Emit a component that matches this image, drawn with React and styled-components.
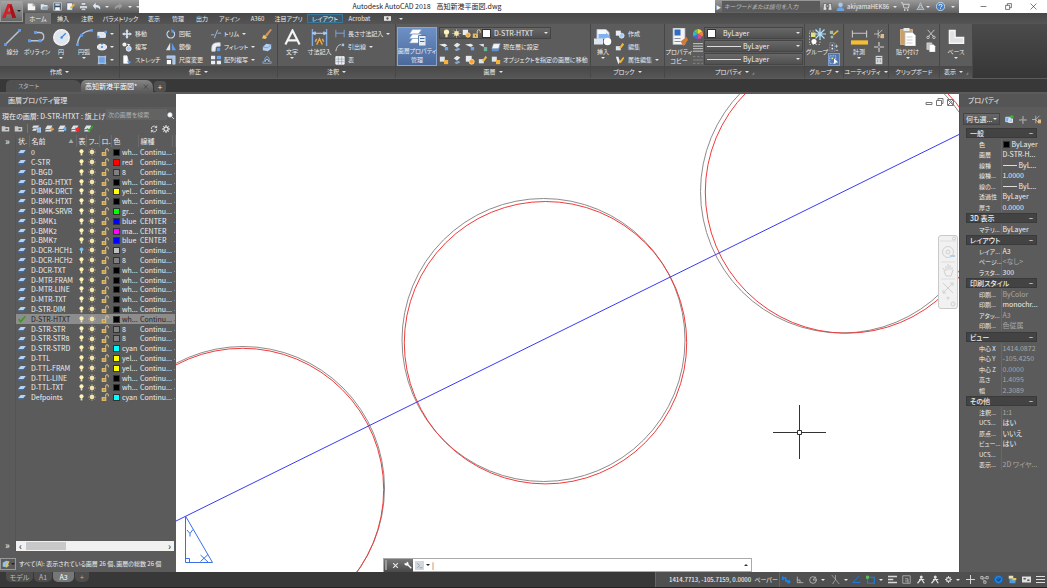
import React from 'react';
import styled, { createGlobalStyle } from 'styled-components';

const icons = {
    line: <g><path d="M1 11L11 1" stroke="#b9c6d6" /><path d="M0 10h2v2H0zM10 0h2v2h-2z" fill="#5f9bea" stroke="none" /></g>,
    polyline: <g><path d="M1 8.500h6.500c4 0 4-5.500 0-5.500H5" stroke="#b9c6d6" strokeWidth=".9" /><path d="M0 7.500h2v2H0zM4 2h2v2H4zM7 7.500h2v2H7z" fill="#5f9bea" stroke="none" /></g>,
    circle: <g><circle cx="6" cy="6" r="5.500" fill="#dfe5ec" stroke="#f2f2f2" /><path d="M6 6l3-3" stroke="#3d82dd" strokeWidth=".8" /><path d="M5.300 5.300h1.500v1.500H5.300z" fill="#3d82dd" stroke="none" /></g>,
    arc: <g><path d="M1 11Q2 2 11 1" stroke="#b9c6d6" /><path d="M0 10h2v2H0zM3 3.500h2v2H3zM10 0h2v2h-2z" fill="#5f9bea" stroke="none" /></g>,
    rect: <g><path d="M1 4h9v6H1z" fill="#dfe5ec" stroke="#fff" /><path d="M9 2h3v3H9zM0 8h3v3H0z" fill="#5f9bea" stroke="none" /></g>,
    ellipse: <g><ellipse cx="6" cy="6" rx="5.500" ry="3.500" fill="#dfe5ec" stroke="#fff" /><path d="M5 5h2v2H5zM5 1h2v2H5z" fill="#2f6fc9" stroke="none" /></g>,
    hatch: <g><path d="M2 2h8v8H2z" fill="#6da2e6" stroke="#c9d9ee" /><path d="M1 1h2v2H1zM9 1h2v2H9zM1 9h2v2H1zM9 9h2v2H9z" fill="#9fc4f5" stroke="none" /></g>,
    move: <g><path d="M6 0l2 3H7v2h2V4l3 2-3 2V7H7v2h1l-2 3-2-3h1V7H3v1L0 6l3-2v1h2V3H4z" fill="#d9e6f5" stroke="none" /></g>,
    copy: <g><circle cx="3" cy="3" r="2.500" fill="#eee" stroke="none" /><circle cx="8" cy="8" r="3" fill="#a9cbf3" stroke="#fff" /><path d="M6 2l4 1-2 2z" fill="#fff" stroke="none" /></g>,
    stretch: <g><path d="M2 1h4l2 9H2z" fill="#fff" stroke="#dfe5ec" /><path d="M6 7l5 1-3 3z" fill="#5f9bea" stroke="none" /></g>,
    rotate: <g><path d="M4 2a4.600 4.600 0 1 0 5 1" stroke="#c4d8f0" strokeWidth="1.300" /><path d="M6 0l4 2-3 3z" fill="#5f9bea" stroke="none" /></g>,
    mirror: <g><path d="M5 1v9H0z" fill="#dfe5ec" stroke="none" /><path d="M7 1v9h5z" fill="#5f9bea" stroke="none" /></g>,
    scale: <g><path d="M1 1h10v10H8V4H1z" fill="#9fc4f5" stroke="#dfe5ec" strokeWidth=".6" /><path d="M1 6h5v5H1z" fill="#fff" stroke="none" /></g>,
    trim: <g><path d="M0 7h4M8 1L4 11M8 5h4" stroke="#a8c8ee" /></g>,
    fillet: <g><path d="M1 11V7q0-6 7-6h3v4H8q-3 0-3 6z" fill="#f1f1f1" stroke="#c9d9ee" /><path d="M7 7h4v4H7z" fill="#5f9bea" stroke="none" /></g>,
    array: <g><path d="M0 1h5v4H0zM0 7h5v4H0zM7 7h5v4H7z" fill="#e7eef7" stroke="none" /><path d="M7 1h5v4H7z" fill="#6fa6ea" stroke="none" /></g>,
    erase: <g><path d="M3 8l7-8 2 1-6 8z" fill="#d69355" stroke="none" /><path d="M0 11l2-4 4 3-2 2z" fill="#f6c65b" stroke="none" /></g>,
    explode: <g><path d="M1 6l4-4 6 1v5l-4 3-6-1z" fill="#b6d0f0" stroke="none" /><path d="M1 6l6 1 4-4" stroke="#5f9bea" /></g>,
    offset: <g><path d="M1 10h10V8H9Q9 2 6 2T3 8H1z" stroke="#7ba9e4" /><path d="M4 8q0-3 2-3t2 3" stroke="#c9d9ee" /></g>,
    letter: <g><path d="M1 11L6 1l5 10M3 8h6" stroke="#f4f4f4" strokeWidth="1.500" /></g>,
    dimension: <g><path d="M1 0v12M11 0v12" stroke="#7ba9e4" /><path d="M1 3h10M1 3l2-1v2zM11 3L9 2v2z" stroke="#bcd4f2" strokeWidth=".7" /><path d="M4 11l2-4 2 4M3 9l1-2M9 9L8 7" stroke="#f2a93b" /></g>,
    length: <g><path d="M1 1v9M11 1v9M1 5h10" stroke="#7fb1f2" /></g>,
    leader: <g><path d="M1 11q1-7 6-8" stroke="#ddd" /><path d="M8 2h3v3H8z" fill="#9fc4f5" stroke="none" /></g>,
    table: <g><path d="M1 2h10v9H1z" fill="#e8edf3" stroke="#fff" /><path d="M1 5h10M1 8h10M4 2v9M8 2v9" stroke="#7a8694" strokeWidth=".6" /></g>,
    layers: <g><path d="M3 1h6L7 4H1zM3 4h6L7 7H1zM3 7h6l-2 3H1z" fill="#fff" stroke="#8aa5c8" strokeWidth=".4" /><path d="M7 5h5v7H7z" fill="#e6ecf4" stroke="#3b5f93" strokeWidth=".5" /><path d="M8 7h3M8 9h3" stroke="#456ea8" strokeWidth=".7" /></g>,
    bulb: <g><circle cx="6" cy="4" r="3.500" fill="#fff3b5" stroke="none" /><path d="M4.500 7h3v4h-3z" fill="#ede3bd" stroke="none" /></g>,
    bulbOff: <g><circle cx="6" cy="4" r="3.200" fill="#7fc0ee" stroke="none" /><path d="M5 7h2v4H5z" fill="#cfdbe4" stroke="none" /></g>,
    sun: <g><circle cx="6" cy="6" r="3.200" fill="#fff0bb" stroke="none" /><path d="M6 0v12M0 6h12M2 2l8 8M10 2l-8 8" stroke="#f0dda0" strokeWidth=".7" /></g>,
    lock: <g><path d="M1 6h7v6H1z" fill="#dcb765" stroke="none" /><path d="M7 6V3q0-2 2-2t2 2v2" stroke="#e6cb8d" strokeWidth="1.300" /><path d="M4 8h1v2H4z" fill="#574718" stroke="none" /></g>,
    layer: <g><path d="M4 3h8L8 8H0z" fill="#b8d4f5" stroke="none" /><path d="M0 8h8l4-5v2L8 10H0z" fill="#41699f" stroke="none" /></g>,
    check: <g><path d="M1 6l3 4 7-8" stroke="#3b9a1e" strokeWidth="2.400" /></g>,
    freeze: <g><path d="M1 1h7v7H1z" fill="#e6ecf2" stroke="none" /><circle cx="8" cy="8" r="3" fill="#f3a637" stroke="#ffe39f" /></g>,
    layerBlue: <g><path d="M0 3l7-1 3 2-3 2z" fill="#e7edf3" stroke="none" /><path d="M7 6h4v4H7z" fill="#68a5ee" stroke="none" /></g>,
    layerDots: <g><path d="M2 4l4-3 4 2-4 4z" fill="#e4e7ea" stroke="none" /><path d="M3 9l5-2 2 2-5 2z" fill="#86a9d4" stroke="none" /></g>,
    layerGreen: <g><path d="M1 3l6-1v4z" fill="#dce3ea" stroke="none" /><path d="M7 6h4v5H7z" fill="#72b29c" stroke="none" /></g>,
    layerGold: <g><path d="M1 2h6v6H1z" fill="#dbe3ec" stroke="none" /><path d="M6 6h5v5H6z" fill="#f2b23c" stroke="none" /></g>,
    stack: <g><path d="M3 2h8L9 8H1z" fill="#f1f4f8" stroke="#8fa6c1" strokeWidth=".6" /><path d="M1 8h8l2-6v3l-2 6H1z" fill="#5f8fd0" stroke="none" /></g>,
    insert: <g><path d="M2 1h6l2 2v4H2z" fill="#f6f7f9" stroke="#b9c9dc" strokeWidth=".6" /><path d="M3 4h5V3l3 3-3 2V7H3z" fill="#7fb1f2" stroke="none" /><path d="M0 7h6v4H0z" fill="#dfe6ef" stroke="none" /><circle cx="9" cy="9" r="2.500" fill="#fff" stroke="none" /></g>,
    block: <g><path d="M1 2h6v6H1z" fill="#e8edf3" stroke="none" /><circle cx="8" cy="8" r="3" fill="#a9cbf3" stroke="#fff" strokeWidth=".7" /></g>,
    blockEdit: <g><path d="M1 5h6v5H1z" fill="#dbe3ec" stroke="none" /><path d="M5 7l4-6 2 2-4 5z" fill="#f2b23c" stroke="none" /></g>,
    attribute: <g><path d="M1 2h3l2 6-2 3z" fill="#e9edf1" stroke="none" /><path d="M5 8l5-6 1 2-4 6z" fill="#f2b23c" stroke="none" /></g>,
    match: <g><path d="M2 0h8v11H2z" fill="#f3f4f6" stroke="#a5afba" strokeWidth=".5" /><path d="M3 1h4v4H3z" fill="#2d6cc0" stroke="none" /><path d="M3 7h4M3 9h4" stroke="#77818d" strokeWidth=".6" /><path d="M7 9l4-3 1 2-3 4z" fill="#d27b35" stroke="none" /></g>,
    wheel: <g stroke="none"><path d="M6 6V0a6 6 0 0 1 5.200 3z" fill="#f5d33c" /><path d="M6 6l5.200-3a6 6 0 0 1 0 6z" fill="#ee8340" /><path d="M6 6l5.200 3A6 6 0 0 1 6 12z" fill="#d9469c" /><path d="M6 6v6a6 6 0 0 1-5.200-3z" fill="#4769d8" /><path d="M6 6L.8 9a6 6 0 0 1 0-6z" fill="#36b6c9" /><path d="M6 6L.8 3A6 6 0 0 1 6 0z" fill="#6cc24a" /></g>,
    lines: <g><path d="M0 2h12M0 5h12M0 8h12M0 11h12" stroke="#dedede" /></g>,
    menu: <g><path d="M0 2h12M0 6h12M0 10h12" stroke="#dedede" strokeWidth="1.400" /></g>,
    linetype: <g><path d="M0 2h3M5 2h3M10 2h2M0 6h12M0 10h3M5 10h3M10 10h2" stroke="#8d8d8d" /></g>,
    group: <g><path d="M1 2h7v9H1z" stroke="#bcbcbc" strokeDasharray="1 1" strokeWidth=".6" /><path d="M2 3h3v3H2z" fill="#e8e173" stroke="none" /><circle cx="4" cy="9" r="1.700" fill="#fff" stroke="none" /><path d="M8 0v8M4 4h8M5 1l6 6M11 1L5 7" stroke="#aee0ff" strokeWidth=".8" /></g>,
    ungroup: <g><path d="M1 2h4v4H1zM2 8h3v3H2z" fill="#9bc2a5" stroke="none" /><path d="M5 7l6-5" stroke="#f2b23c" strokeWidth="2" /></g>,
    groupEdit: <g><path d="M1 1h6v10H1z" stroke="#91b2dc" strokeDasharray="1 1" /><path d="M3 3h2v2H3zM3 7h2v2H3z" fill="#dce6f2" stroke="none" /><path d="M9 3v4M7 5h4M8 10h3" stroke="#ccc" /></g>,
    groupSelect: <g><path d="M1 1h7v9H1z" stroke="#e9f3ff" strokeDasharray="1 1" /><path d="M3 3h2v2H3z" fill="#d7e98b" stroke="none" /><path d="M6 4l5 5-3 0-2 2z" fill="#fff" stroke="none" /></g>,
    measure: <g><path d="M1 1v5M11 1v5M1 3h10" stroke="#c4c4c4" strokeWidth=".8" /><path d="M0 8h12v3H0z" fill="#f5bd30" stroke="none" /></g>,
    quick: <g><path d="M0 6h5M5 1v10M5 6l5-5M5 6l4 5" stroke="#d1d1d1" strokeWidth=".9" /><path d="M8 6h4v5H8z" fill="#e3bb83" stroke="none" /></g>,
    point: <g><path d="M6 0v5M6 7v5M0 6h5M7 6h5" stroke="#d9d9d9" strokeWidth="1.300" /></g>,
    cross: <g><path d="M6 0v12M0 6h12" stroke="#d9d9d9" strokeWidth="1.300" /></g>,
    calc: <g><path d="M2 1h8v10H2z" fill="#d7dadd" stroke="none" /><path d="M3 3h6M4 6h1M7 6h1M4 8h1M7 8h1" stroke="#555" /></g>,
    paste: <g><path d="M1 1h8v10H1z" fill="#caa066" stroke="#e1bf8e" strokeWidth=".5" /><path d="M3 0h4v2H3z" fill="#e9e9e9" stroke="none" /><path d="M4 3h5l2 2v7H4z" fill="#fff" stroke="#b8bcc2" strokeWidth=".5" /><path d="M5 6h4M5 8h4M5 10h4" stroke="#aaa" strokeWidth=".4" /></g>,
    cut: <g><path d="M2 1l7 8M10 1L3 9" stroke="#dadada" /><circle cx="2.500" cy="10" r="1.500" stroke="#dadada" /><circle cx="9.500" cy="10" r="1.500" stroke="#dadada" /></g>,
    pages: <g><path d="M1 1h6v8H1z" fill="#bfc3c8" stroke="#eee" strokeWidth=".6" /><path d="M4 3h5l2 2v7H4z" fill="#fff" stroke="#999" strokeWidth=".4" /></g>,
    base: <g><path d="M1 1h4v5h6v4H1z" fill="#dfe1e4" stroke="#f5f5f5" /></g>,
    fileNew: <g><path d="M1 2h7l3 3v6H1z" fill="#f4f4f4" stroke="none" /><path d="M8 2v3h3" stroke="#7b8288" /></g>,
    open: <g><path d="M1 3h4l1 1h4v6H1z" fill="#dbe7ef" stroke="none" /><path d="M2 9l2-3h8l-2 4z" fill="#95a7b3" stroke="none" /></g>,
    save: <g><path d="M1 1h10v10H1z" fill="#354c61" stroke="#dce4ea" /><path d="M3 7h6v4H3z" fill="#fff" stroke="none" /><path d="M3 2h6v3H3z" fill="#c7d4df" stroke="none" /></g>,
    saveAs: <g><path d="M1 1h8v10H1z" fill="#f4f4f4" stroke="#445b70" /><path d="M5 8l5-6 2 2-5 5z" fill="#efad37" stroke="none" /></g>,
    print: <g><path d="M3 1h6v3H3zM1 5h10v4H1zM3 8h6v3H3z" fill="#e8ecef" stroke="#39424b" strokeWidth=".5" /></g>,
    undo: <g><path d="M1 5l4-4v3q7 0 6 6-2-3-6-3v3z" fill="#dbe9f7" stroke="none" /></g>,
    redo: <g><path d="M11 5L7 1v3Q0 4 1 10q2-3 6-3v3z" fill="#9a9fa4" stroke="none" /></g>,
    binoculars: <g><path d="M1 2h4v9H0zM7 2h4l1 9H7zM4 4h4v3H4z" fill="#dedede" stroke="#333" strokeWidth=".6" /></g>,
    user: <g><circle cx="6" cy="3.500" r="3" fill="#a5c9f2" stroke="none" /><path d="M1 12q0-5 5-5t5 5z" fill="#6fa2dc" stroke="none" /></g>,
    cart: <g><path d="M0 1h2l2 7h6l1-5H3" stroke="#e7edf3" /><circle cx="5" cy="10.500" r="1" fill="#fff" /><circle cx="9" cy="10.500" r="1" fill="#fff" /></g>,
    autodesk: <g><path d="M6 1l3 7H3zM1 10l5-6 5 6z" stroke="#b9d0ea" /></g>,
    help: <g><circle cx="6" cy="6" r="5.500" fill="#3f7ec6" stroke="#e3edf7" /><path d="M4 5q0-2 2-2t2 1.500Q8 6 6 7M6 8.500v1" stroke="#fff" strokeWidth="1.300" /></g>,
    folder: <g><path d="M1 3h4l1 1h5v6H1z" fill="#c7c7c7" stroke="none" /><path d="M6 6h3v2H6z" fill="#555" stroke="none" /></g>,
    layerState: <g><path d="M2 2h8L7 5H0zM2 6h5l-2 3H0z" fill="#dce3ea" stroke="none" /><path d="M7 5h5v6H7z" fill="#89b8ec" stroke="#eee" strokeWidth=".6" /></g>,
    layerNew: <g><path d="M3 2h7L7 7H0zM1 8h7v2H0z" fill="#dce3ea" stroke="none" /><path d="M9 4v6M6 7h6" stroke="#f79b31" strokeWidth="1.700" /></g>,
    layerVp: <g><path d="M3 2h7L7 7H0zM1 8h7v2H0z" fill="#dce3ea" stroke="none" /><path d="M8 4h3v5H8z" fill="#6aafe5" stroke="none" /></g>,
    layerDel: <g><path d="M3 2h7L7 7H0zM1 8h7v2H0z" fill="#dce3ea" stroke="none" /><path d="M6 5l5 5M11 5l-5 5" stroke="#f02b2b" strokeWidth="1.700" /></g>,
    layerSet: <g><path d="M3 2h7L7 7H0zM1 8h7v2H0z" fill="#dce3ea" stroke="none" /><path d="M4 6l3 3 5-6" stroke="#35a52b" strokeWidth="2" /></g>,
    refresh: <g><path d="M2 6a4 4 0 0 1 7-3l1 1M10 6a4 4 0 0 1-7 3L2 8M10 1v3H7M2 11V8h3" stroke="#e1e1e1" strokeWidth="1.300" /></g>,
    gear: <g><circle cx="6" cy="6" r="3.200" stroke="#ececec" strokeWidth="1.800" /><path d="M6 0v2M6 10v2M0 6h2M10 6h2M2 2l1 1M9 9l1 1M10 2L9 3M3 9l-1 1" stroke="#ececec" strokeWidth="1.500" /></g>,
    search: <g><circle cx="5" cy="5" r="4" fill="#fff" stroke="#b9c7d6" /><path d="M8 8l4 4" stroke="#e6e6e6" strokeWidth="1.500" /></g>,
    addSel: <g><path d="M1 3h6v6H1z" fill="#76aaf0" stroke="#e8f1fb" /><path d="M5 5h5v5H5z" fill="#a7c9f5" stroke="#fff" /><path d="M9 0v5M6.500 2.500h5" stroke="#31c431" strokeWidth="1.600" /></g>,
    pick: <g><path d="M6 0v4M6 8v4M0 6h4M8 6h4M6 4l2 2-2 2-2-2z" stroke="#dedede" /></g>,
    wrench: <g><path d="M11 11L5 5" stroke="#fff" strokeWidth="2" /><path d="M1 3a3 3 0 1 0 3-2v2.500H2z" fill="#fff" stroke="none" /></g>,
    prompt: <g><path d="M0 0h12v12H0z" fill="#d3d8e0" stroke="none" /><path d="M3 3l3 3-3 3M6 9h4" stroke="#8b8f96" /></g>,
    snapGrid: <g><path d="M1 2v5M1 4h4v4h6M7 10h4" stroke="#1684f3" strokeWidth="2" /></g>,
    ortho: <g><path d="M2 1v9h9M2 6h4v4" stroke="#d5d5d5" /></g>,
    polar: <g><circle cx="6" cy="6" r="5" stroke="#d5d5d5" /><path d="M6 6h6M6 6l4-5" stroke="#d5d5d5" /></g>,
    iso: <g><path d="M1 0l10 12M6 0v6L2 12" stroke="#c7c7c7" strokeWidth=".8" /></g>,
    angle: <g><path d="M10 1L1 10h10" stroke="#187ee8" strokeWidth="1.200" /></g>,
    osnap: <g><path d="M2 3h9v8H2z" stroke="#187ee8" strokeWidth="1.600" /><path d="M0 1h4v4H0z" fill="#5bbd5b" stroke="none" /></g>,
    weight: <g><path d="M0 2h12M0 6h7M0 10h12" stroke="#d9d9d9" strokeWidth="1.800" /></g>,
    cycle: <g><path d="M1 1h10v10H1zM4 5h4v6M4 8h4" stroke="#bdbdbd" /></g>,
    person: <g><circle cx="7" cy="2.500" r="2" fill="#e2e2e2" stroke="none" /><path d="M2 11l5-6 4 6M4 6h7" stroke="#e2e2e2" strokeWidth="1.600" /></g>,
    nodes: <g><path d="M1 2h3v3H1zM8 2h3v3H8zM5 8h3v3H5zM4 4h4M3 5l3 3" stroke="#cfcfcf" /></g>,
    hardware: <g><circle cx="6" cy="6" r="6" fill="#1368bb" stroke="none" /><circle cx="6" cy="6" r="4" stroke="#3a9bec" /><path d="M4 6l2 2 3-4" stroke="#103e72" /></g>,
    isolate: <g><path d="M1 1h6v4H1z" fill="#e9e4bd" stroke="none" /><path d="M2 5h8v6H2z" fill="#4b9ce0" stroke="none" /><path d="M6 4h5v3H6z" fill="#f0c541" stroke="none" /></g>,
    screen: <g><path d="M0 2h12v8H0z" fill="#e0e0e0" stroke="none" /><path d="M2 4h3v2H2zM7 6h3v2H7z" fill="#555" stroke="none" /></g>,
    min: <path d="M1 6h10" stroke="#222" />,
    restore: <path d="M1 4h7v7H1zM4 4V1h7v7H8" stroke="#222" />,
    close: <path d="M1 1l10 10M11 1L1 11" stroke="#222" />,
    closeLight: <path d="M2 2l8 8M10 2l-8 8" stroke="#eee" strokeWidth="1.800" />,
    camera: <g><path d="M0 2h12v8H0z" fill="#e3e3e3" stroke="none" /><circle cx="6" cy="6" r="2" fill="#555" stroke="none" /></g>,
    filter: <g><path d="M1 4l5-3 5 1-4 9-6-1z" fill="#8fc1ec" stroke="none" /><path d="M6 6l5-4-2 5 2 1-5 4 1-4z" fill="#f2c738" stroke="none" /></g>,
};

const Icon = ({ name, size = 10 }) => (
    <IconSvg width={size} height={size} viewBox="0 0 12 12" fill="none" aria-hidden="true">{icons[name]}</IconSvg>
);

const menuTabs = [
    ['ホーム', 26], ['挿入', 24], ['注釈', 24], ['パラメトリック', 43], ['表示', 24], ['管理', 24], ['出力', 24],
    ['アドイン', 31], ['A360', 25], ['注目アプリ', 37], ['レイアウト', 36], ['Acrobat', 33],
];

const layers = [
    ['0', '#000', 'wh...'], ['C-STR', '#f00', 'red'], ['D-BGD', '#808080', '8'], ['D-BGD-HTXT', '#000', 'wh...'],
    ['D-BMK-DRCT', '#ff0', 'yel...'], ['D-BMK-HTXT', '#000', 'wh...'], ['D-BMK-SRVR', '#0f0', 'gr...'],
    ['D-BMK1', '#00f', 'blue', 'CENTER'], ['D-BMK2', '#f0f', 'ma...', 'CENTER'], ['D-BMK7', '#00f', 'blue', 'CENTER'],
    ['D-DCR-HCH1', '#c0c0c0', '9'], ['D-DCR-HCH2', '#808080', '8'], ['D-DCR-TXT', '#000', 'wh...'],
    ['D-MTR-FRAM', '#000', 'wh...'], ['D-MTR-LINE', '#000', 'wh...'], ['D-MTR-TXT', '#000', 'wh...'],
    ['D-STR-DIM', '#000', 'wh...'], ['D-STR-HTXT', '#000', 'wh...'], ['D-STR-STR', '#808080', '8'],
    ['D-STR-STR8', '#808080', '8'], ['D-STR-STRD', '#0ff', 'cyan'], ['D-TTL', '#ff0', 'yel...'],
    ['D-TTL-FRAM', '#ff0', 'yel...'], ['D-TTL-LINE', '#000', 'wh...'], ['D-TTL-TXT', '#000', 'wh...'],
    ['Defpoints', '#0ff', 'cyan'],
];

// [label, value, read only]
const properties = [
    ['一般', [['色', '■ ByLayer'], ['画層', 'D-STR-H...'], ['線種', '— ByL...'], ['線種...', '1.0000'], ['線の...', '— ByL...'], ['透過性', 'ByLayer'], ['厚さ', '0.0000']]],
    ['3D 表示', [['マテリ...', 'ByLayer']]],
    ['レイアウト', [['レイア...', 'A3'], ['ページ...', '<なし>', true], ['ラスタ...', '300']]],
    ['印刷スタイル', [['印刷...', 'ByColor', true], ['印刷...', 'monochr...'], ['アタッ...', 'A3', true], ['印刷...', '色従属', true]]],
    ['ビュー', [['中心 X', '1414.0872', true], ['中心 Y', '-105.4250', true], ['中心 Z', '0.0000', true], ['高さ', '1.4095', true], ['幅', '2.3089', true]]],
    ['その他', [['注釈...', '1:1', true], ['UCS...', 'はい'], ['原点...', 'いいえ'], ['ビュー...', 'はい'], ['UCS...', ''], ['表示...', '2D ワイヤ...', true]]],
];

const Panel = ({ title, width, launcher, noCaret, children }) => (
    <RibbonPanel $w={width}>
        <PanelBody>{children}</PanelBody>
        <PanelTitle>
            <span>{title}</span>
            {!noCaret && <Caret />}
            {launcher && <Launcher>⌟</Launcher>}
        </PanelTitle>
    </RibbonPanel>
);

const Big = ({ icon, label, width, size = 20, caret, active }) => (
    <BigButton $w={width} $active={active}>
        <BigIcon><Icon name={icon} size={size} /></BigIcon>
        <BigLabel>{label}</BigLabel>
        {caret && <Caret />}
    </BigButton>
);

const Tool = ({ icon, label, caret, active }) => (
    <ToolButton $active={active} aria-label={label || icon}>
        <Icon name={icon} />
        {label && <span>{label}</span>}
        {caret && <Caret />}
    </ToolButton>
);

const PropertyValue = ({ value }) => {
    if (value.startsWith('■')) return <ValueBox><Swatch $c="#000" />ByLayer</ValueBox>;
    if (value.startsWith('—')) return <ValueBox><Rule $w={14} />ByL...</ValueBox>;
    return value;
};

const Header = () => (
    <Top>
        <AppButton aria-label="アプリケーション メニュー">
            <svg width="15" height="17" viewBox="0 0 16 18"><path d="M0 16L6 1h4l5 15h-4l-1-4H5l-1 4zM6 9h3L8 4z" fill="#d42027" /><path d="M10 1l5 15h-4L8 4z" fill="#a3151b" /></svg>
            <Caret $dark />
        </AppButton>
        <TitleBar>
            <QuickAccess>
                {['fileNew', 'open', 'save', 'saveAs', 'print', 'undo'].map((n) => <IconButton key={n} $w={13} aria-label={n}><Icon name={n} size={9} /></IconButton>)}
                <Caret />
                <IconButton $w={15} aria-label="redo"><Icon name="redo" size={9} /></IconButton>
                <Caret /><Caret />
            </QuickAccess>
            <WindowTitle>Autodesk AutoCAD 2018<span>高知新港平面図.dwg</span></WindowTitle>
            <InfoCenter>
                <Expand>▶</Expand>
                <KeywordInput aria-label="キーワード検索" placeholder="キーワードまたは語句を入力" />
                <IconButton $w={13} aria-label="検索"><Icon name="binoculars" size={9} /></IconButton>
                <IconButton $w={13} aria-label="ユーザー"><Icon name="user" size={9} /></IconButton>
                <UserName>akiyamaHEK86</UserName><Caret />
                <IconButton $w={17} aria-label="カート"><Icon name="cart" size={9} /></IconButton>
                <IconButton $w={12} aria-label="アプリ"><Icon name="autodesk" size={9} /></IconButton><Caret />
                <IconButton $w={21} aria-label="ヘルプ"><Icon name="help" size={9} /></IconButton><Caret />
            </InfoCenter>
            <WindowButtons>
                {['min', 'restore', 'close'].map((n) => <IconButton key={n} $w={25} aria-label={n}><Icon name={n} size={7} /></IconButton>)}
            </WindowButtons>
        </TitleBar>
        <MenuTabs>
            {menuTabs.map(([label, w], i) => <MenuTab key={label} $w={w} $on={i === 0} $context={label === 'レイアウト'}>{label}</MenuTab>)}
            <IconButton $w={23} aria-label="録画"><Icon name="camera" size={7} /></IconButton><Caret />
        </MenuTabs>
    </Top>
);

const Ribbon = () => (
    <RibbonBar>
        <Panel title="作成" width={120}>
            <Big icon="line" label="線分" width={23} size={17} />
            <Big icon="polyline" label="ポリライン" width={26} size={18} />
            <Big icon="circle" label="円" width={22} size={17} caret />
            <Big icon="arc" label="円弧" width={24} size={17} caret />
            <ToolColumn $w={22}>
                <Tool icon="rect" caret /><Tool icon="ellipse" caret /><Tool icon="hatch" caret />
            </ToolColumn>
        </Panel>
        <Panel title="修正" width={158}>
            <ToolColumn $w={44}><Tool icon="move" label="移動" /><Tool icon="copy" label="複写" /><Tool icon="stretch" label="ストレッチ" /></ToolColumn>
            <ToolColumn $w={45}><Tool icon="rotate" label="回転" /><Tool icon="mirror" label="鏡像" /><Tool icon="scale" label="尺度変更" /></ToolColumn>
            <ToolColumn $w={51}><Tool icon="trim" label="トリム" caret /><Tool icon="fillet" label="フィレット" caret /><Tool icon="array" label="配列複写" caret /></ToolColumn>
            <ToolColumn $w={14}><Tool icon="erase" /><Tool icon="explode" /><Tool icon="offset" /></ToolColumn>
        </Panel>
        <Panel title="注釈" width={118}>
            <Big icon="letter" label="文字" width={26} size={17} caret />
            <Big icon="dimension" label="寸法記入" width={29} size={17} />
            <ToolColumn $w={60}><Tool icon="length" label="長さ寸法記入" caret /><Tool icon="leader" label="引出線" caret /><Tool icon="table" label="表" /></ToolColumn>
        </Panel>
        <Panel title="画層" width={195}>
            <Big icon="layers" label={<>画層プロパティ<br />管理</>} width={40} size={18} active />
            <LayerTools>
                <ComboBox $w={112} $gap={1}>
                    <Icon name="bulb" size={9} /><Icon name="sun" size={9} /><Icon name="freeze" size={9} /><Icon name="lock" size={9} />
                    <Swatch $c="#fff" $big />
                    <Select $indent={2} aria-label="画層"><option>D-STR-HTXT</option></Select><Caret />
                </ComboBox>
                <ToolRow>
                    <Icon name="layerBlue" /><Icon name="layerDots" /><Icon name="layerBlue" /><Icon name="layerGreen" />
                    <Tool icon="stack" label="現在層に設定" />
                </ToolRow>
                <ToolRow>
                    <Icon name="layerGold" /><Icon name="layerDots" /><Icon name="freeze" /><Icon name="blockEdit" />
                    <Tool icon="layerGold" label="オブジェクトを指定の画層に移動" />
                </ToolRow>
            </LayerTools>
        </Panel>
        <Panel title="ブロック" width={74}>
            <Big icon="insert" label="挿入" width={22} size={18} caret />
            <ToolColumn $w={49}><Tool icon="block" label="作成" /><Tool icon="blockEdit" label="編集" /><Tool icon="attribute" label="属性編集" caret /></ToolColumn>
        </Panel>
        <Panel title="プロパティ" width={140} launcher>
            <Big icon="match" label={<>プロパティ<br />コピー</>} width={26} size={18} />
            <ToolColumn $w={12}><Tool icon="wheel" /><Tool icon="lines" /><Tool icon="linetype" /></ToolColumn>
            <ToolColumn $w={99}>
                <ComboBox $w={99} $gap={4}><Swatch $c="#fff" $big /><Select $indent={3} aria-label="色"><option>ByLayer</option></Select><Caret /></ComboBox>
                <ComboBox $w={99} $gap={2}><Rule $w={34} /><Select aria-label="線の太さ"><option>ByLayer</option></Select><Caret /></ComboBox>
                <ComboBox $w={99} $gap={2}><Rule $w={34} /><Select aria-label="線種"><option>ByLayer</option></Select><Caret /></ComboBox>
            </ToolColumn>
        </Panel>
        <Panel title="グループ" width={39}>
            <Big icon="group" label="グループ" width={22} size={18} />
            <ToolColumn $w={14}><Tool icon="ungroup" /><Tool icon="groupEdit" /><Tool icon="groupSelect" active /></ToolColumn>
        </Panel>
        <Panel title="ユーティリティ" width={45}>
            <Big icon="measure" label="計測" width={28} size={17} caret />
            <ToolColumn $w={12}><Tool icon="quick" /><Tool icon="point" /><Tool icon="calc" /></ToolColumn>
        </Panel>
        <Panel title="クリップボード" width={51} noCaret>
            <Big icon="paste" label="貼り付け" width={35} size={18} caret />
            <ToolColumn $w={12}><Tool icon="cut" /><Tool icon="pages" /></ToolColumn>
        </Panel>
        <Panel title="表示" width={33} launcher>
            <Big icon="base" label="ベース" width={30} size={17} caret />
        </Panel>
    </RibbonBar>
);

const LayerPalette = () => (
    <LeftPalette>
        <PaletteTitle>画層プロパティ管理</PaletteTitle>
        <CurrentLayer>
            <span>現在の画層: D-STR-HTXT : 旗上げ</span>
            <LayerSearch aria-label="画層を検索" placeholder="次の画層を検索" />
            <Icon name="search" size={7} />
        </CurrentLayer>
        <PaletteTools>
            <Icon name="folder" size={9} /><Icon name="folder" size={9} /><Divider />
            {['layerState', 'layerNew', 'layerVp', 'layerDel', 'layerSet'].map((n) => <Icon key={n} name={n} size={9} />)}
            <Spacer />
            <Icon name="refresh" size={8} /><Icon name="gear" size={8} />
        </PaletteTools>
        <LayerBody>
            <Rail><span>»</span><span>»</span></Rail>
            <LayerList>
                <LayerTable>
                    <colgroup>
                        {[13, 47, 10, 13, 12, 27, 34, 3].map((w, i) => <Col key={i} $w={w} />)}
                    </colgroup>
                    <thead>
                        <tr><th>状.</th><th>名前<Sort>▲</Sort></th><th>表.</th><th>フ...</th><th>ロ..</th><th>色</th><th>線種</th><th /></tr>
                    </thead>
                    <tbody>
                        {layers.map(([name, color, colorName, type = 'Continu...']) => (
                            <LayerRow key={name} $current={name === 'D-STR-HTXT'}>
                                <td><Icon name={name === 'D-STR-HTXT' ? 'check' : 'layer'} size={8} /></td>
                                <td>{name}</td>
                                <td><Icon name={name === 'D-DCR-HCH1' ? 'bulbOff' : 'bulb'} size={7} /></td>
                                <td><Icon name="sun" size={8} /></td>
                                <td><Icon name="lock" size={8} /></td>
                                <td><ValueBox><Swatch $c={color} />{colorName}</ValueBox></td>
                                <td>{type}</td>
                                <td>-</td>
                            </LayerRow>
                        ))}
                    </tbody>
                </LayerTable>
                <ScrollBar><span>‹</span><ScrollThumb /><span>›</span></ScrollBar>
            </LayerList>
        </LayerBody>
        <LayerFooter>
            <FilterButton aria-label="フィルタ"><Icon name="filter" size={8} /><Caret $dark /></FilterButton>
            <span>すべて(A): 表示されている画層 26 個、画層の総数 26 個</span>
        </LayerFooter>
    </LeftPalette>
);

const Drawing = () => (
    <Canvas>
        <DrawingSvg>
            <g transform="translate(-176 -94)" fill="none">
                <g stroke="#8c8c8c">
                    <circle cx="543.500" cy="340" r="141.500" />
                    <circle cx="243" cy="488" r="141.500" />
                    <circle cx="842" cy="191.500" r="141.500" />
                </g>
                <g stroke="#f23a3a">
                    <circle cx="545.500" cy="342.700" r="141.200" />
                    <circle cx="242.500" cy="489.500" r="141.200" />
                    <circle cx="846.500" cy="192" r="141.200" />
                </g>
                <path d="M176 521L960 134" stroke="#3a3af5" />
                <path d="M185.500 516V562.500H212.500zM185.500 558.500h4v4M187 530l3 3.500 3-4M190 533.500v3M200.500 555l7.500 7M208 554.500l-7.500 7" stroke="#3b6fe8" />
                <path d="M773 432.500h24M802 432.500h24M799.500 405v25M799.500 435v24M797.500 430.500h4v4h-4z" stroke="#333" />
            </g>
        </DrawingSvg>
        <ViewButtons>
            <svg width="30" height="9" viewBox="0 0 30 9" fill="none" stroke="#777">
                <path d="M1 4.500h6v2H1zM11.500 2.500h5v5h-5zM13 2.500v-2h5v5h-2M22.500 1.500h6v6h-6zM23 2l5 5M28 2l-5 5" />
            </svg>
        </ViewButtons>
        <NavBar>
            <svg width="18" height="72" viewBox="0 0 18 72" fill="none" stroke="#d0d0d0">
                <path d="M1 5h16M2 26h14M2 43h14" strokeWidth=".6" />
                <circle cx="15" cy="2.500" r="1.500" />
                <circle cx="9" cy="16" r="5.500" /><circle cx="9" cy="16" r="2" /><path d="M11 20h5" stroke="#b5d0e0" strokeWidth="2" />
                <path d="M5 35l2 5h5l2-6M4 32l2 3M7 35v-5M9 34v-6M11 34v-5M13 34v-3M4 47l10 10M14 47L4 57M11 47h3v3M4 54v3h3" />
                <circle cx="9" cy="62" r="1" /><circle cx="14" cy="68" r="2" />
            </svg>
        </NavBar>
        <CommandLine>
            <CommandHandle><Grip /><Icon name="closeLight" size={7} /><Icon name="wrench" size={8} /></CommandHandle>
            <Icon name="prompt" size={9} /><Caret $dark />
            <CommandInput aria-label="コマンド" defaultValue="|" />
            <CaretUp />
        </CommandLine>
    </Canvas>
);

const PropertyPalette = () => (
    <RightPalette>
        <PaletteTitle>プロパティ</PaletteTitle>
        <SelectionBar>
            <ComboBox $w={37} $gap={1}><Select aria-label="選択"><option>何も選...</option></Select><Caret /></ComboBox>
            <Icon name="addSel" size={9} /><Icon name="pick" size={8} /><Icon name="quick" size={9} />
        </SelectionBar>
        {properties.map(([title, rows]) => (
            <section key={title}>
                <SectionTitle>{title}<span>−</span></SectionTitle>
                <PropertyTable>
                    <tbody>
                        {rows.map(([label, value, muted], i) => (
                            <PropertyRow key={i} $muted={muted}>
                                <th scope="row">{label}</th>
                                <td><PropertyValue value={value} /></td>
                            </PropertyRow>
                        ))}
                    </tbody>
                </PropertyTable>
            </section>
        ))}
    </RightPalette>
);

const Footer = () => (
    <StatusBar>
        <LayoutTabs>
            <LayoutTab $w={27}>モデル</LayoutTab><LayoutTab $w={18}>A1</LayoutTab><LayoutTab $w={21} $on>A3</LayoutTab><LayoutTab $w={14}>+</LayoutTab>
        </LayoutTabs>
        <StatusTools>
            <Coordinates>1414.7713, -105.7159, 0.0000</Coordinates>
            <PaperButton>ペーパー</PaperButton>
            <StatusIcon><Icon name="snapGrid" size={9} /></StatusIcon>
            <StatusIcon><Icon name="ortho" size={8} /></StatusIcon>
            <StatusIcon $w={22}><Icon name="polar" size={8} /><Caret /></StatusIcon>
            <StatusIcon $w={22}><Icon name="iso" size={9} /><Caret /></StatusIcon>
            <StatusIcon><Icon name="angle" size={9} /></StatusIcon>
            <StatusIcon $w={22}><Icon name="osnap" size={9} /><Caret /></StatusIcon>
            {['weight', 'cycle', 'person', 'person'].map((n, i) => <StatusIcon key={i} $w={14}><Icon name={n} size={9} /></StatusIcon>)}
            <StatusIcon $w={22}><Icon name="gear" size={7} /><Caret /></StatusIcon>
            {['cross', 'nodes', 'hardware', 'isolate', 'screen', 'menu'].map((n) => <StatusIcon key={n} $w={14}><Icon name={n} size={9} /></StatusIcon>)}
        </StatusTools>
    </StatusBar>
);

const App = () => (
    <Page>
        <GlobalStyle />
        <Header />
        <Ribbon />
        <FileTabs>
            <FileTab $w={75}>スタート</FileTab>
            <FileTab $w={72} $on>高知新港平面図*<span>×</span></FileTab>
            <AddTab>+</AddTab>
        </FileTabs>
        <Workspace>
            <LayerPalette />
            <Drawing />
            <PropertyPalette />
        </Workspace>
        <Footer />
    </Page>
);

export default App;

const GlobalStyle = createGlobalStyle`
    *{
        box-sizing: border-box;
    }

    body{
        margin: 0;
        background: #383838;
        color: #eee;
        font-family: "Noto Sans CJK JP", "Noto Sans", sans-serif;
        font-feature-settings: "palt";
        font-size: 7px;
        line-height: 10px;
    }

    button, input, select{
        font: inherit;
        font-feature-settings: inherit;
        color: inherit;
        border: 0;
        padding: 0;
        margin: 0;
        background: none;
        border-radius: 0;
        outline: none;
        min-width: 0;
    }
`

const Page = styled.div`
    display: flex;
    flex-direction: column;
    min-height: 100vh;
    white-space: nowrap;
`

const IconSvg = styled.svg`
    flex: none;
    display: block;
`

const Caret = styled.i`
    flex: none;
    border: 2px solid transparent;
    border-top-color: ${({ $dark }) => ($dark ? '#222' : '#e6e6e6')};
    border-bottom: 0;
`

const CaretUp = styled.i`
    border: 2px solid transparent;
    border-bottom-color: #333;
    border-top: 0;
`

const Spacer = styled.div`
    flex: 1;
`

const Swatch = styled.span`
    flex: none;
    width: ${({ $big }) => ($big ? 9 : 7)}px;
    height: ${({ $big }) => ($big ? 9 : 7)}px;
    background: ${({ $c }) => $c};
    border: 1px solid #333;
`

const Rule = styled.span`
    flex: none;
    width: ${({ $w }) => $w}px;
    height: 1px;
    background: #ddd;
`

const ValueBox = styled.span`
    display: flex;
    align-items: center;
    gap: 2px;
`

const IconButton = styled.button`
    flex: none;
    width: ${({ $w }) => $w}px;
    display: flex;
    align-items: center;
    justify-content: center;
`

const Top = styled.header`
    display: grid;
    grid-template-columns: 23px 1fr;
    grid-template-rows: 13px 11px;
    background: #4f4f4f;
`

const AppButton = styled.button`
    grid-row: 1 / 3;
    display: flex;
    align-items: center;
    justify-content: center;
    height: 22px;
    background: linear-gradient(#a5a5a5, #666);
    border: 1px solid #999;
`

const TitleBar = styled.div`
    display: flex;
    background: #fff;
`

const QuickAccess = styled.div`
    flex: none;
    display: flex;
    align-items: center;
    width: 116px;
    padding-left: 2px;
    background: linear-gradient(#9a9a9a, #5b5b5b);

    i{
        margin: 0 2px;
    }
`

const WindowTitle = styled.h1`
    flex: 1;
    margin: 0;
    font-size: 7px;
    line-height: 13px;
    font-weight: 400;
    text-align: center;
    color: #222;

    span{
        margin-left: 6px;
    }
`

const InfoCenter = styled.div`
    flex: none;
    display: flex;
    align-items: center;
    width: 244px;
    background: linear-gradient(#999, #606060);
`

const Expand = styled.button`
    width: 7px;
    font-size: 5px;
`

const KeywordInput = styled.input`
    width: 98px;
    height: 11px;
    padding-left: 2px;
    margin-right: 1px;
    background: #5b5b5b;
    font-size: 6px;
    font-style: italic;

    &::placeholder{
        color: #bdbdbd;
    }
`

const UserName = styled.span`
    width: 46px;
    font-size: 6px;
`

const WindowButtons = styled.div`
    width: 88px;
    display: flex;
    padding-left: 12px;
`

const MenuTabs = styled.nav`
    display: flex;
    align-items: center;
    padding-left: 2px;
    background: linear-gradient(#484848, #545454);
`

const MenuTab = styled.button`
    flex: none;
    width: ${({ $w }) => $w}px;
    height: ${({ $context }) => ($context ? 9 : 11)}px;
    line-height: 9px;
    font-size: 6px;
    background: ${({ $on }) => ($on ? '#737373' : 'none')};
    ${({ $context }) => $context && 'background: #415767; border: 1px solid #397798; line-height: 7px;'}
`

const RibbonBar = styled.div`
    display: flex;
    background: linear-gradient(#4b4b4b, #363636);
    border-bottom: 1px solid #5b5b5b;
`

const RibbonPanel = styled.section`
    flex: none;
    width: ${({ $w }) => $w}px;
    background: #5c5c5c;
    border-right: 1px solid #474747;
`

const PanelBody = styled.div`
    display: flex;
    height: 42px;
    padding: 3px 0 0 1px;
`

const PanelTitle = styled.div`
    display: flex;
    align-items: center;
    justify-content: center;
    gap: 3px;
    height: 12px;
    font-size: 6px;
    background: linear-gradient(#484848, #565656);
`

const Launcher = styled.span`
    font-size: 5px;
`

const BigButton = styled.button`
    flex: none;
    width: ${({ $w }) => $w}px;
    height: 39px;
    display: flex;
    flex-direction: column;
    align-items: center;
    ${({ $active }) => $active && 'background: linear-gradient(#6c90c6, #4c699b); border: 1px solid #86a6d5;'}
`

const BigIcon = styled.span`
    height: 20px;
    display: flex;
    align-items: center;
`

const BigLabel = styled.span`
    font-size: 6px;
    line-height: 9px;
    margin-bottom: 1px;
`

const ToolColumn = styled.div`
    flex: none;
    width: ${({ $w }) => $w}px;
    display: flex;
    flex-direction: column;
    align-items: flex-start;
`

const ToolButton = styled.button`
    display: flex;
    align-items: center;
    gap: 3px;
    height: 13px;
    padding: 0 1px;
    font-size: 6px;
    ${({ $active }) => $active && 'background: #5276ac; border: 1px solid #7c9fd2; padding: 0;'}
`

const LayerTools = styled.div`
    padding-left: 2px;
`

const ToolRow = styled.div`
    display: flex;
    align-items: center;
    gap: 3px;
    height: 13px;

    button{
        gap: 2px;
        padding: 0;
    }
`

const ComboBox = styled.div`
    flex: none;
    width: ${({ $w }) => $w}px;
    height: 12px;
    margin-bottom: 1px;
    display: flex;
    align-items: center;
    gap: ${({ $gap }) => $gap}px;
    padding: 0 2px;
    background: linear-gradient(#686868, #505050);
    border: 1px solid #454545;
`

const Select = styled.select`
    flex: 1;
    appearance: none;
    font-size: 7px;
    line-height: 10px;
    padding-left: ${({ $indent = 0 }) => $indent}px;
`

const FileTabs = styled.nav`
    display: flex;
    align-items: flex-end;
    height: 15px;
    padding-left: 6px;
    border-bottom: 2px solid #5b5b5b;
`

const FileTab = styled.button`
    width: ${({ $w }) => $w}px;
    height: 12px;
    padding-left: ${({ $on }) => ($on ? 4 : 12)}px;
    font-size: ${({ $on }) => ($on ? 7 : 6)}px;
    line-height: 12px;
    text-align: left;
    color: ${({ $on }) => ($on ? '#fff' : '#bbb')};
    background: ${({ $on }) => ($on ? 'linear-gradient(#858585, #5b5b5b)' : '#505050')};
    border-radius: 5px 7px 0 0;

    span{
        margin-left: 5px;
        color: #333;
    }
`

const AddTab = styled.button`
    width: 12px;
    height: 11px;
    margin-left: 1px;
    background: #505050;
    border-radius: 3px;
    font-size: 8px;
`

const Workspace = styled.main`
    flex: 1;
    display: flex;
`

const LeftPalette = styled.aside`
    flex: none;
    width: 176px;
    display: flex;
    flex-direction: column;
    background: #5b5b5b;
`

const PaletteTitle = styled.h2`
    margin: 0;
    padding-left: 8px;
    height: 13px;
    font-size: 7px;
    line-height: 12px;
    font-weight: 400;
    background: #555;
`

const CurrentLayer = styled.div`
    display: flex;
    align-items: center;
    height: 15px;
    padding: 2px 2px 0 2px;

    span{
        width: 104px;
    }
`

const LayerSearch = styled.input`
    flex: 1;
    height: 11px;
    padding-left: 2px;
    background: #636363;
    align-self: flex-start;
    font-size: 6px;

    &::placeholder{
        color: #b2b2b2;
    }
`

const PaletteTools = styled.div`
    display: flex;
    align-items: center;
    gap: 4px;
    height: 13px;
    padding: 0 6px 0 1px;
`

const Divider = styled.i`
    width: 1px;
    height: 9px;
    background: #777;
`

const LayerBody = styled.div`
    flex: 1;
    display: flex;
`

const Rail = styled.div`
    width: 16px;
    display: flex;
    flex-direction: column;
    justify-content: space-between;
    text-align: center;
    border-right: 1px solid #545454;
    font-size: 10px;
    line-height: 12px;
`

const LayerList = styled.div`
    flex: 1;
    display: flex;
    flex-direction: column;
    justify-content: space-between;
`

const Col = styled.col`
    width: ${({ $w }) => $w}px;
`

const LayerTable = styled.table`
    width: 159px;
    table-layout: fixed;
    border-collapse: collapse;

    th{
        height: 12px;
        padding: 0 0 0 2px;
        font-size: 7px;
        font-weight: 400;
        text-align: left;
        overflow: hidden;
        border-right: 1px solid #6b6b6b;
    }

    td{
        padding: 0 0 0 2px;
        overflow: hidden;
        line-height: 9px;
    }
`

const LayerRow = styled.tr`
    height: 10px;
    background: ${({ $current }) => ($current ? '#8d8d8d' : 'none')};
    color: ${({ $current }) => ($current ? '#222' : '#eee')};

    &:nth-child(5n){
        height: 9px;
    }
`

const Sort = styled.span`
    float: right;
    padding-right: 2px;
    font-size: 5px;
    color: #aaa;
`

const ScrollBar = styled.div`
    display: flex;
    align-items: center;
    height: 10px;
    padding: 0 3px;
    margin-right: 2px;
    background: #f1f1f1;
    color: #222;
    font-size: 10px;
    line-height: 8px;
    justify-content: space-between;
`

const ScrollThumb = styled.div`
    width: 40px;
    height: 8px;
    margin-right: auto;
    margin-left: 4px;
    background: #c8c8c8;
`

const LayerFooter = styled.div`
    display: flex;
    align-items: center;
    height: 21px;
    padding-top: 5px;
    gap: 3px;
    font-size: 6px;
`

const FilterButton = styled.button`
    display: flex;
    align-items: center;
    gap: 1px;
    width: 16px;
    height: 12px;
    padding-left: 1px;
    border: 1px solid #999;
`

const Canvas = styled.div`
    flex: 1;
    position: relative;
    overflow: hidden;
    background: #fff;
`

const DrawingSvg = styled.svg`
    position: absolute;
    inset: 0;
    width: 100%;
    height: 100%;
`

const ViewButtons = styled.div`
    position: absolute;
    top: 4px;
    right: 4px;
`

const NavBar = styled.div`
    position: absolute;
    top: 141px;
    right: 1px;
    width: 20px;
    height: 74px;
    background: #f1f1f1;
    border: 1px solid #c9c9c9;
    border-radius: 3px;
`

const CommandLine = styled.form`
    position: absolute;
    left: 207px;
    right: 207px;
    bottom: 0;
    height: 14px;
    display: flex;
    align-items: center;
    gap: 2px;
    padding-right: 3px;
    background: #fff;
    border: 1px solid #aaa;
    color: #333;
`

const CommandHandle = styled.div`
    display: flex;
    align-items: center;
    gap: 5px;
    width: 29px;
    height: 13px;
    padding-left: 1px;
    background: linear-gradient(#777, #494949);
`

const Grip = styled.i`
    width: 2px;
    height: 10px;
    background: #999;
`

const CommandInput = styled.input`
    flex: 1;
`

const RightPalette = styled.aside`
    flex: none;
    width: 88px;
    background: #5b5b5b;
    border-left: 1px solid #505050;
`

const SelectionBar = styled.div`
    display: flex;
    align-items: center;
    gap: 5px;
    height: 21px;
    padding: 4px 0 0 3px;
`

const SectionTitle = styled.h3`
    display: flex;
    justify-content: space-between;
    align-items: center;
    height: 10px;
    margin: 0 10px 1px 6px;
    padding: 0 3px;
    font-size: 7px;
    font-weight: 500;
    background: #434343;
    border: 1px solid #3a3a3a;
`

const PropertyTable = styled.table`
    width: 62px;
    margin-left: 16px;
    margin-bottom: 1px;
    table-layout: fixed;
    border-collapse: collapse;

    th{
        width: 25px;
        padding: 0 0 0 3px;
        font-size: 6px;
        font-weight: 400;
        text-align: left;
        border-right: 1px solid #686868;
    }

    td{
        padding: 0 0 0 1px;
        font-size: 7px;
    }
`

const PropertyRow = styled.tr`
    height: 10px;
    line-height: 9px;

    td{
        color: ${({ $muted }) => ($muted ? '#a8a8a8' : '#eee')};
    }

    &:nth-child(2n){
        height: 11px;
    }
`

const StatusBar = styled.footer`
    display: flex;
    justify-content: space-between;
    height: 16px;
    background: #383838;
    border-bottom: 1px solid #222;
`

const LayoutTabs = styled.nav`
    display: flex;
    gap: 1px;
    padding-left: 6px;
`

const LayoutTab = styled.button`
    width: ${({ $w }) => $w}px;
    height: 10px;
    line-height: 10px;
    color: ${({ $on }) => ($on ? '#fff' : '#bbb')};
    background: ${({ $on }) => ($on ? '#777' : '#4d4d4d')};
    border-radius: 0 0 5px 5px;
`

const StatusTools = styled.div`
    width: 392px;
    display: flex;
    align-items: center;
    background: #505050;
    border-left: 1px solid #666;
`

const Coordinates = styled.span`
    width: 98px;
    padding-right: 2px;
    text-align: right;
    font-size: 6px;
    font-weight: 500;
`

const PaperButton = styled.button`
    width: 27px;
    height: 15px;
    font-size: 6px;
    border-right: 1px solid #666;
`

const StatusIcon = styled.span`
    flex: none;
    width: ${({ $w = 13 }) => $w}px;
    display: flex;
    align-items: center;
    justify-content: center;
    gap: 4px;
`
